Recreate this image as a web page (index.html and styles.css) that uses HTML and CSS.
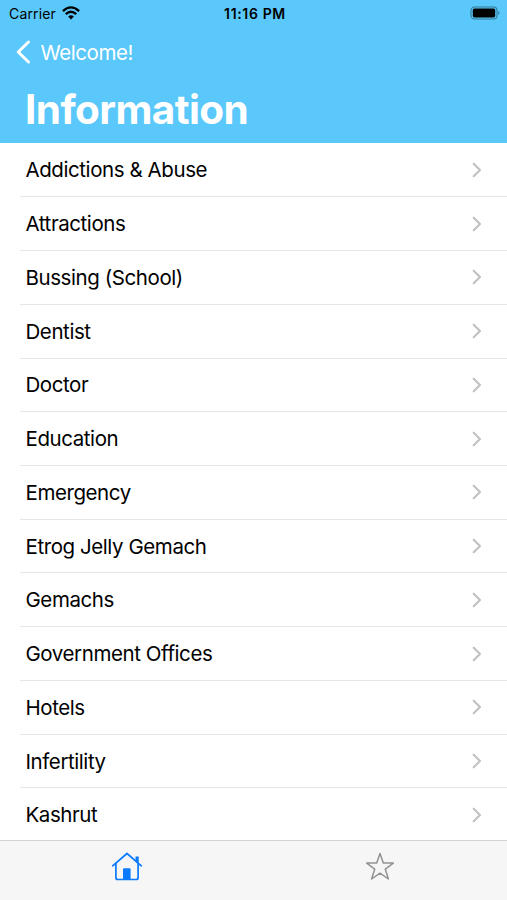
FILE: index.html
```html
<!DOCTYPE html>
<html lang="en">
<head>
<meta charset="utf-8">
<title>Information</title>
<link rel="stylesheet" href="styles.css">
</head>
<body>
<div class="screen">
  <header class="header">
    <div class="status">
      <div class="carrier"><span>Carrier</span>
        <svg class="wifi" width="18" height="14" viewBox="0 0 18 14"><g fill="none" stroke="#000" stroke-width="2.3"><path d="M.9 5.1Q9-2.3 17.1 5.1"/><path d="M3.8 8.1Q9 3.4 14.2 8.1"/></g><path d="M6.1 10.4Q9 8 11.9 10.4L9 13.5Z"/></svg>
      </div>
      <span class="time">11:16 PM</span>
      <svg class="battery" width="30" height="14" viewBox="0 0 30 14"><rect x="1" y="1" width="26" height="12" rx="3.5" fill="none" stroke="#347896" stroke-width="1.1"/><rect x="2.8" y="2.6" width="22.4" height="8.8" rx="1.6"/><path d="M28.2 5Q30.8 7 28.2 9Z" fill="#347896"/></svg>
    </div>
    <a class="back"><svg width="16" height="24" viewBox="0 0 16 24"><path d="M13.5 2L3.2 12L13.5 22" fill="none" stroke="#fff" stroke-width="3" stroke-linecap="round" stroke-linejoin="round"/></svg><span>Welcome!</span></a>
    <h1 class="title">Information</h1>
  </header>
  <main class="list" id="list"></main>
  <nav class="tabs">
    <a class="tab"><svg width="34" height="32" viewBox="0 0 34 32"><g fill="none" stroke="#0a7aff" stroke-width="1.7" stroke-linecap="round" stroke-linejoin="round"><path d="M2.7 15.8L17 3.5L31.3 15.8"/><path d="M5.9 13.5V27.5Q5.9 29.5 7.9 29.5H26.1Q28.1 29.5 28.1 27.5V13.5"/></g><path d="M25.5 6.5H28.7V13.8L25.5 11ZM13 29.5V19.2Q13 18.2 14 18.2H19.6Q20.6 18.2 20.6 19.2V29.5Z" fill="#0a7aff"/></svg></a>
    <a class="tab"><svg width="34" height="32" viewBox="0 0 34 32"><path d="M17 3.5L20.3 13.1H30.3L22.3 19.2L25.4 29L17 23.2L8.6 29L11.7 19.2L3.7 13.1H13.7Z" fill="none" stroke="#929292" stroke-width="1.5" stroke-linejoin="round"/></svg></a>
  </nav>
</div>
<script src="script.js"></script>
</body>
</html>
```
FILE: styles.css
```css
* { box-sizing: border-box; }
body { margin: 0; font-family: Inter, "Liberation Sans", sans-serif; color: #000; background: #fff; }
.screen { width: 507px; height: 900px; display: flex; flex-direction: column; overflow: hidden; }
.header { height: 142.7px; flex: none; background: #5ac8fa; }
.status { height: 27px; padding: 0 7px 0 9px; display: grid; grid-template-columns: 1fr auto 1fr; align-items: center; font-size: 14px; }
.carrier { display: flex; align-items: center; gap: 6px; letter-spacing: .15px; }
.wifi { margin-top: -2px; }
.time { font-weight: 600; font-size: 14px; letter-spacing: .65px; margin-right: -1px; }
.battery { justify-self: end; margin-top: -1px; }
.back { height: 50px; padding-left: 15px; display: flex; align-items: center; gap: 9.5px; color: #fff; font-size: 20.5px; letter-spacing: -.42px; }
.title { margin: 0; padding-left: 25px; color: #fff; font-size: 40.5px; line-height: 65px; font-weight: 700; letter-spacing: -.6px; }
.list { flex: 1; min-height: 0; overflow: hidden; padding-top: .9px; }
.row { height: 53.74px; margin-left: 20px; padding: 0 25px 0 5.5px; display: flex; align-items: center; justify-content: space-between; border-bottom: 1px solid #e6e6e8; font-size: 20.5px; letter-spacing: -.42px; }
.row:last-child { border-bottom-color: transparent; }
.tabs { height: 60.5px; flex: none; display: flex; background: #f6f6f6; border-top: 1px solid #d2d2d2; }
.tab { flex: 1; display: flex; justify-content: center; padding-top: 9.5px; }
```
FILE: script.js
```js
const items = ["Addictions & Abuse", "Attractions", "Bussing (School)", "Dentist", "Doctor", "Education", "Emergency", "Etrog Jelly Gemach", "Gemachs", "Government Offices", "Hotels", "Infertility", "Kashrut"];
const list = document.getElementById("list");
for (const name of items) {
  const row = document.createElement("div");
  row.className = "row";
  const label = document.createElement("span");
  label.textContent = name;
  row.append(label);
  row.insertAdjacentHTML("beforeend", '<svg width="10" height="16" viewBox="0 0 10 16"><path d="M1.7 1.7L8 8L1.7 14.3" fill="none" stroke="#c1c1c4" stroke-width="2.1" stroke-linecap="round" stroke-linejoin="round"/></svg>');
  list.append(row);
}
```
